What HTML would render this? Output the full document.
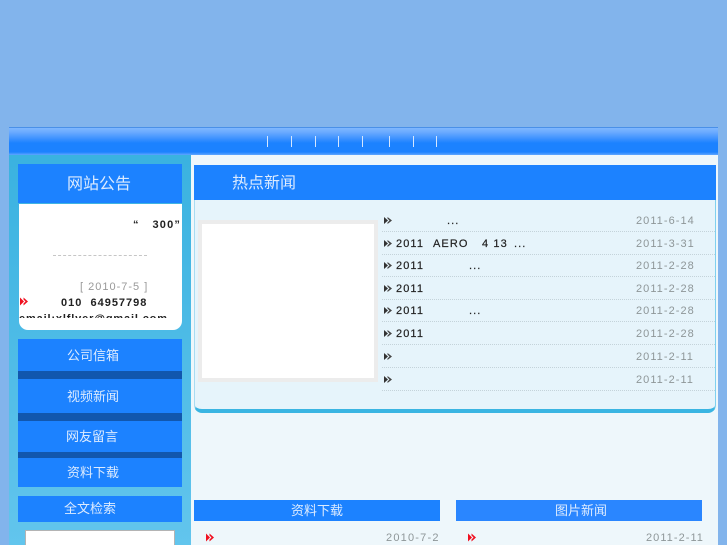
<!DOCTYPE html>
<html lang="zh">
<head>
<meta charset="utf-8">
<title>网站</title>
<style>
html,body{margin:0;padding:0;width:727px;height:545px;overflow:hidden}
body{position:relative;background:#82b4ec;font-family:"Liberation Sans","Noto Sans CJK SC",sans-serif}
.a{position:absolute}
.bar{background:#1c82ff}
.t{position:absolute;color:#dcebff;text-align:center;white-space:nowrap;font-family:"WenQuanYi Zen Hei","Noto Sans CJK SC",sans-serif}
.sep{position:absolute;top:136px;width:1px;height:11px;background:#d5e7ff}
.row{position:absolute;left:382px;width:333px;height:22px;border-bottom:1px dotted #c4d3da}
.row span{position:absolute;top:5px;font-size:11px;line-height:14px;letter-spacing:1.1px;color:#222;white-space:pre;-webkit-text-stroke:.2px #222}
.row .d{left:254px;color:#8e9698;letter-spacing:1.05px;-webkit-text-stroke:0}
.row svg{position:absolute;left:2px;top:7px}
</style>
</head>
<body>
<!-- Nav -->
<div class="a" style="left:9px;top:127px;width:709px;height:1px;background:#4a90e8"></div>
<div class="a" style="left:9px;top:128px;width:709px;height:27px;background:linear-gradient(#80b8ff 0,#6cabff 4px,#3a90ff 11px,#1c82ff 15px,#1c82ff 24px,#5fa6ff 27px)"></div>
<div class="sep" style="left:267px"></div><div class="sep" style="left:291px"></div><div class="sep" style="left:315px"></div><div class="sep" style="left:338px"></div><div class="sep" style="left:362px"></div><div class="sep" style="left:389px"></div><div class="sep" style="left:413px"></div><div class="sep" style="left:436px"></div>

<!-- Left column -->
<div class="a" style="left:9px;top:155px;width:182px;height:390px;background:linear-gradient(#3ab2e0,#62c5ed)"></div>
<div class="a bar" style="left:18px;top:164px;width:164px;height:39px"></div>
<div class="t" style="left:18px;top:171px;width:164px;font-size:16px;line-height:23px;margin-left:-1px">网站公告</div>
<div class="a" style="left:19px;top:204px;width:163px;height:126px;background:#fff;border-radius:0 0 9px 9px"></div>
<div class="a" style="left:19px;top:204px;width:163px;height:114px;overflow:hidden;font-size:11px;color:#222;font-weight:bold">
  <div class="a" style="left:114px;top:14px;line-height:14px;letter-spacing:1.2px;white-space:pre;">“   300”</div>
  <div class="a" style="left:34px;top:51px;width:94px;border-top:1px dashed #c6c6c6"></div>
  <div class="a" style="left:61px;top:76px;line-height:14px;letter-spacing:1px;font-weight:normal;color:#999;white-space:pre">[ 2010-7-5 ]</div>
  <div class="a" style="left:42px;top:92px;line-height:14px;letter-spacing:1px;white-space:pre">010  64957798</div>
  <div class="a" style="left:0;top:108px;line-height:14px;letter-spacing:.85px;white-space:pre">email:xlflyer@gmail.com</div>
  <svg class="a" style="left:1px;top:93px" width="8" height="9" viewBox="0 0 8 9"><path d="M0 0.5L4 4.5L0 8.5Z" fill="#f01020"/><path d="M3.5 0.5L8 4.5L3.5 8.5L3.5 6.5L5.5 4.5L3.5 2.5Z" fill="#f01020"/></svg>
</div>

<div class="a bar" style="left:18px;top:339px;width:164px;height:148px"></div>
<div class="a" style="left:18px;top:371px;width:164px;height:8px;background:#1157ae"></div>
<div class="a" style="left:18px;top:413px;width:164px;height:8px;background:#1157ae"></div>
<div class="a" style="left:18px;top:452px;width:164px;height:6px;background:#1157ae"></div>
<div class="t" style="left:67px;top:345px;font-size:13px;line-height:19px">公司信箱</div>
<div class="t" style="left:67px;top:386px;font-size:13px;line-height:19px">视频新闻</div>
<div class="t" style="left:66px;top:426px;font-size:13px;line-height:19px">网友留言</div>
<div class="t" style="left:67px;top:462px;font-size:13px;line-height:19px">资料下载</div>
<div class="a bar" style="left:18px;top:496px;width:164px;height:26px"></div>
<div class="t" style="left:64px;top:498px;font-size:13px;line-height:19px">全文检索</div>
<div class="a" style="left:25px;top:530px;width:148px;height:15px;background:#fff;border:1px solid #b4b4b4;border-bottom:0"></div>

<!-- Main -->
<div class="a" style="left:191px;top:155px;width:527px;height:390px;background:#eef7fb"></div>
<div class="a" style="left:194px;top:165px;width:522px;height:248px;box-sizing:border-box;background:#e6f4fb;border-left:1px solid #a8dcf2;border-right:1px solid #7ed0ef;border-bottom:4px solid #3ab5e2;border-radius:0 0 8px 8px"></div>
<div class="a bar" style="left:194px;top:165px;width:522px;height:35px"></div>
<div class="t" style="left:232px;top:171px;font-size:16px;line-height:21px">热点新闻</div>
<div class="a" style="left:198px;top:220px;width:172px;height:154px;background:#fff;border:4px solid #ececec"></div>

<div class="row" style="top:209px"><svg width="8" height="9" viewBox="0 0 8 9"><path d="M0 1L4 4.5L0 8Z" fill="#333"/><path d="M3.5 1L8 4.5L3.5 8L3.5 6.5L5.5 4.5L3.5 2.5Z" fill="#444"/></svg><span style="left:65px">...</span><span class="d">2011-6-14</span></div>
<div class="row" style="top:232px"><svg width="8" height="9" viewBox="0 0 8 9"><path d="M0 1L4 4.5L0 8Z" fill="#333"/><path d="M3.5 1L8 4.5L3.5 8L3.5 6.5L5.5 4.5L3.5 2.5Z" fill="#444"/></svg><span style="left:14px">2011</span><span style="left:51px">AERO</span><span style="left:100px">4 13</span><span style="left:132px">...</span><span class="d">2011-3-31</span></div>
<div class="row" style="top:254px"><svg width="8" height="9" viewBox="0 0 8 9"><path d="M0 1L4 4.5L0 8Z" fill="#333"/><path d="M3.5 1L8 4.5L3.5 8L3.5 6.5L5.5 4.5L3.5 2.5Z" fill="#444"/></svg><span style="left:14px">2011</span><span style="left:87px">...</span><span class="d">2011-2-28</span></div>
<div class="row" style="top:277px"><svg width="8" height="9" viewBox="0 0 8 9"><path d="M0 1L4 4.5L0 8Z" fill="#333"/><path d="M3.5 1L8 4.5L3.5 8L3.5 6.5L5.5 4.5L3.5 2.5Z" fill="#444"/></svg><span style="left:14px">2011</span><span class="d">2011-2-28</span></div>
<div class="row" style="top:299px"><svg width="8" height="9" viewBox="0 0 8 9"><path d="M0 1L4 4.5L0 8Z" fill="#333"/><path d="M3.5 1L8 4.5L3.5 8L3.5 6.5L5.5 4.5L3.5 2.5Z" fill="#444"/></svg><span style="left:14px">2011</span><span style="left:87px">...</span><span class="d">2011-2-28</span></div>
<div class="row" style="top:322px"><svg width="8" height="9" viewBox="0 0 8 9"><path d="M0 1L4 4.5L0 8Z" fill="#333"/><path d="M3.5 1L8 4.5L3.5 8L3.5 6.5L5.5 4.5L3.5 2.5Z" fill="#444"/></svg><span style="left:14px">2011</span><span class="d">2011-2-28</span></div>
<div class="row" style="top:345px"><svg width="8" height="9" viewBox="0 0 8 9"><path d="M0 1L4 4.5L0 8Z" fill="#333"/><path d="M3.5 1L8 4.5L3.5 8L3.5 6.5L5.5 4.5L3.5 2.5Z" fill="#444"/></svg><span class="d">2011-2-11</span></div>
<div class="row" style="top:368px"><svg width="8" height="9" viewBox="0 0 8 9"><path d="M0 1L4 4.5L0 8Z" fill="#333"/><path d="M3.5 1L8 4.5L3.5 8L3.5 6.5L5.5 4.5L3.5 2.5Z" fill="#444"/></svg><span class="d">2011-2-11</span></div>

<!-- Bottom panels -->
<div class="a bar" style="left:194px;top:500px;width:246px;height:21px"></div>
<div class="t" style="left:291px;top:500px;font-size:13px;line-height:19px">资料下载</div>
<div class="a bar" style="left:456px;top:500px;width:246px;height:21px;background:#2a86ff"></div>
<div class="t" style="left:555px;top:500px;font-size:13px;line-height:19px">图片新闻</div>
<svg class="a" style="left:206px;top:533px" width="8" height="9" viewBox="0 0 8 9"><path d="M0 0.5L4 4.5L0 8.5Z" fill="#f01020"/><path d="M3.5 0.5L8 4.5L3.5 8.5L3.5 6.5L5.5 4.5L3.5 2.5Z" fill="#f01020"/></svg>
<svg class="a" style="left:468px;top:533px" width="8" height="9" viewBox="0 0 8 9"><path d="M0 0.5L4 4.5L0 8.5Z" fill="#f01020"/><path d="M3.5 0.5L8 4.5L3.5 8.5L3.5 6.5L5.5 4.5L3.5 2.5Z" fill="#f01020"/></svg>
<div class="a" style="left:386px;top:531px;font-size:11px;line-height:14px;letter-spacing:1.2px;color:#8e9698;white-space:pre">2010-7-2</div>
<div class="a" style="left:646px;top:531px;font-size:11px;line-height:14px;letter-spacing:1.05px;color:#8e9698;white-space:pre">2011-2-11</div>
</body>
</html>
